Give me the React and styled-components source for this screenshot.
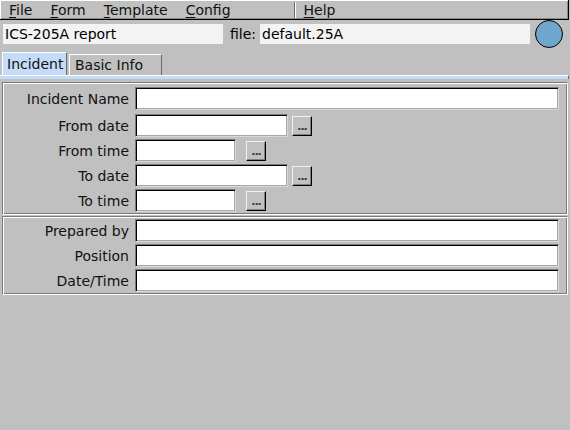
import React from "react";
import styled, { createGlobalStyle } from "styled-components";

const GlobalStyle = createGlobalStyle`
  html, body {
    margin: 0;
    padding: 0;
    background: #c0c0c0;
  }
  body {
    font-family: "DejaVu Sans", "Liberation Sans", sans-serif;
    font-size: 14px;
    color: #000;
  }
`;

const incidentRows = [
  { label: "Incident Name", width: null },
  { label: "From date", width: 153, pick: 4 },
  { label: "From time", width: 101, pick: 10 },
  { label: "To date", width: 153, pick: 4 },
  { label: "To time", width: 101, pick: 10 },
];

const preparedRows = ["Prepared by", "Position", "Date/Time"];

export default function App() {
  return (
    <>
      <GlobalStyle />
      <Window>
        <MenuBar>
          <MenuItem><u>F</u>ile</MenuItem>
          <MenuItem><u>F</u>orm</MenuItem>
          <MenuItem><u>T</u>emplate</MenuItem>
          <MenuItem><u>C</u>onfig</MenuItem>
          <MenuDivider />
          <MenuItem><u>H</u>elp</MenuItem>
        </MenuBar>

        <TopRow>
          <FlatInput $width={220}>ICS-205A report</FlatInput>
          <FileLabel>file:</FileLabel>
          <FlatInput $width={270}>default.25A</FlatInput>
          <StatusLight />
        </TopRow>

        <TabBar>
          <Tab $active $width={65}>Incident</Tab>
          <Tab $width={93}>Basic Info</Tab>
        </TabBar>
        <TabStrip />

        <Panel>
          {incidentRows.map((row, i) => (
            <Row key={row.label} $first={i === 0}>
              <Label>{row.label}</Label>
              <Input $width={row.width} />
              {row.pick && <PickButton $gap={row.pick}>...</PickButton>}
            </Row>
          ))}
        </Panel>

        <Panel>
          {preparedRows.map((label) => (
            <Row key={label}>
              <Label>{label}</Label>
              <Input />
            </Row>
          ))}
        </Panel>
      </Window>
    </>
  );
}

const Window = styled.div`
  width: 570px;
  height: 430px;
  background: #c0c0c0;
  overflow: hidden;
`;

const MenuBar = styled.div`
  display: flex;
  align-items: center;
  box-sizing: border-box;
  width: 569px;
  height: 20px;
  padding-left: 0;
  border-bottom: 1px solid #000;
  border-right: 1px solid #000;
  box-shadow: inset 1px 1px 0 #fff, inset -1px -1px 0 #8a8a8a;
`;

const MenuItem = styled.span`
  padding: 0 9px;
  line-height: 18px;
  color: #111;

  u {
    text-decoration-thickness: 1px;
    text-underline-offset: 2px;
  }
`;

const MenuDivider = styled.span`
  width: 1px;
  height: 16px;
  margin-left: 54px;
  margin-right: -1px;
  background: #6a6a6a;
  border-right: 1px solid #fff;
`;

const TopRow = styled.div`
  display: flex;
  align-items: center;
  height: 28px;
  padding-left: 3px;
`;

const FlatInput = styled.div`
  box-sizing: border-box;
  width: ${(p) => p.$width}px;
  height: 20px;
  padding-left: 2px;
  background: #f3f3f3;
  line-height: 20px;
  white-space: nowrap;
`;

const FileLabel = styled.span`
  margin: 0 4px 0 7px;
`;

const StatusLight = styled.div`
  box-sizing: border-box;
  width: 28px;
  height: 28px;
  margin-left: 5px;
  border-radius: 50%;
  border: 1px solid #000;
  background: #6fa6cc;
`;

const TabBar = styled.div`
  display: flex;
  align-items: flex-end;
  gap: 2px;
  height: 23px;
  margin-top: 4px;
  padding-left: 2px;
`;

const Tab = styled.div`
  box-sizing: border-box;
  width: ${(p) => p.$width}px;
  height: ${(p) => (p.$active ? 23 : 21)}px;
  padding-left: ${(p) => (p.$active ? 4 : 5)}px;
  background: ${(p) => (p.$active ? "#c5dcf8" : "#c0c0c0")};
  border-top: 1px solid #fff;
  border-left: 1px solid #fff;
  border-right: 1px solid #6a6a6a;
  line-height: ${(p) => (p.$active ? 22 : 20)}px;
  white-space: nowrap;
  color: #111;
`;

const TabStrip = styled.div`
  box-sizing: border-box;
  width: 569px;
  height: 4px;
  margin-bottom: 3px;
  background: #c5dcf8;
  border-top: 1px solid #fff;
  border-right: 1px solid #6a6a6a;
`;

const Panel = styled.div`
  display: flex;
  flex-direction: column;
  gap: 2px;
  margin: 0 2px 1px;
  padding: 4px 8px 2px 0;
  border: 1px solid;
  border-color: #7a7a7a #fff #fff #7a7a7a;
  box-shadow: inset 1px 1px 0 #fff, inset -1px -1px 0 #7a7a7a;

  & + & {
    padding-top: 2px;
  }
`;

const Row = styled.div`
  display: flex;
  align-items: center;
  height: 23px;
  margin-bottom: ${(p) => (p.$first ? 2 : 0)}px;
`;

const Label = styled.span`
  flex: 0 0 126px;
  padding-right: 6px;
  text-align: right;
  white-space: nowrap;
  color: #111;
`;

const Input = styled.div`
  box-sizing: border-box;
  ${(p) => (p.$width ? `width: ${p.$width}px;` : "flex: 1;")}
  height: 23px;
  background: #fff;
  border: 1px solid;
  border-color: #7a7a7a #d8d8d8 #d8d8d8 #7a7a7a;
  box-shadow: inset 1px 1px 0 #000, inset -1px -1px 0 #a8a8a8;
`;

const PickButton = styled.div`
  box-sizing: border-box;
  width: 20px;
  height: 20px;
  margin-left: ${(p) => p.$gap}px;
  background: #c0c0c0;
  border: 1px solid;
  border-color: #f0f0f0 #000 #000 #f0f0f0;
  box-shadow: inset -1px -1px 0 #808080;
  font-size: 11px;
  font-weight: bold;
  line-height: 20px;
  text-align: center;
  color: #3a3050;
  letter-spacing: -1px;
`;
